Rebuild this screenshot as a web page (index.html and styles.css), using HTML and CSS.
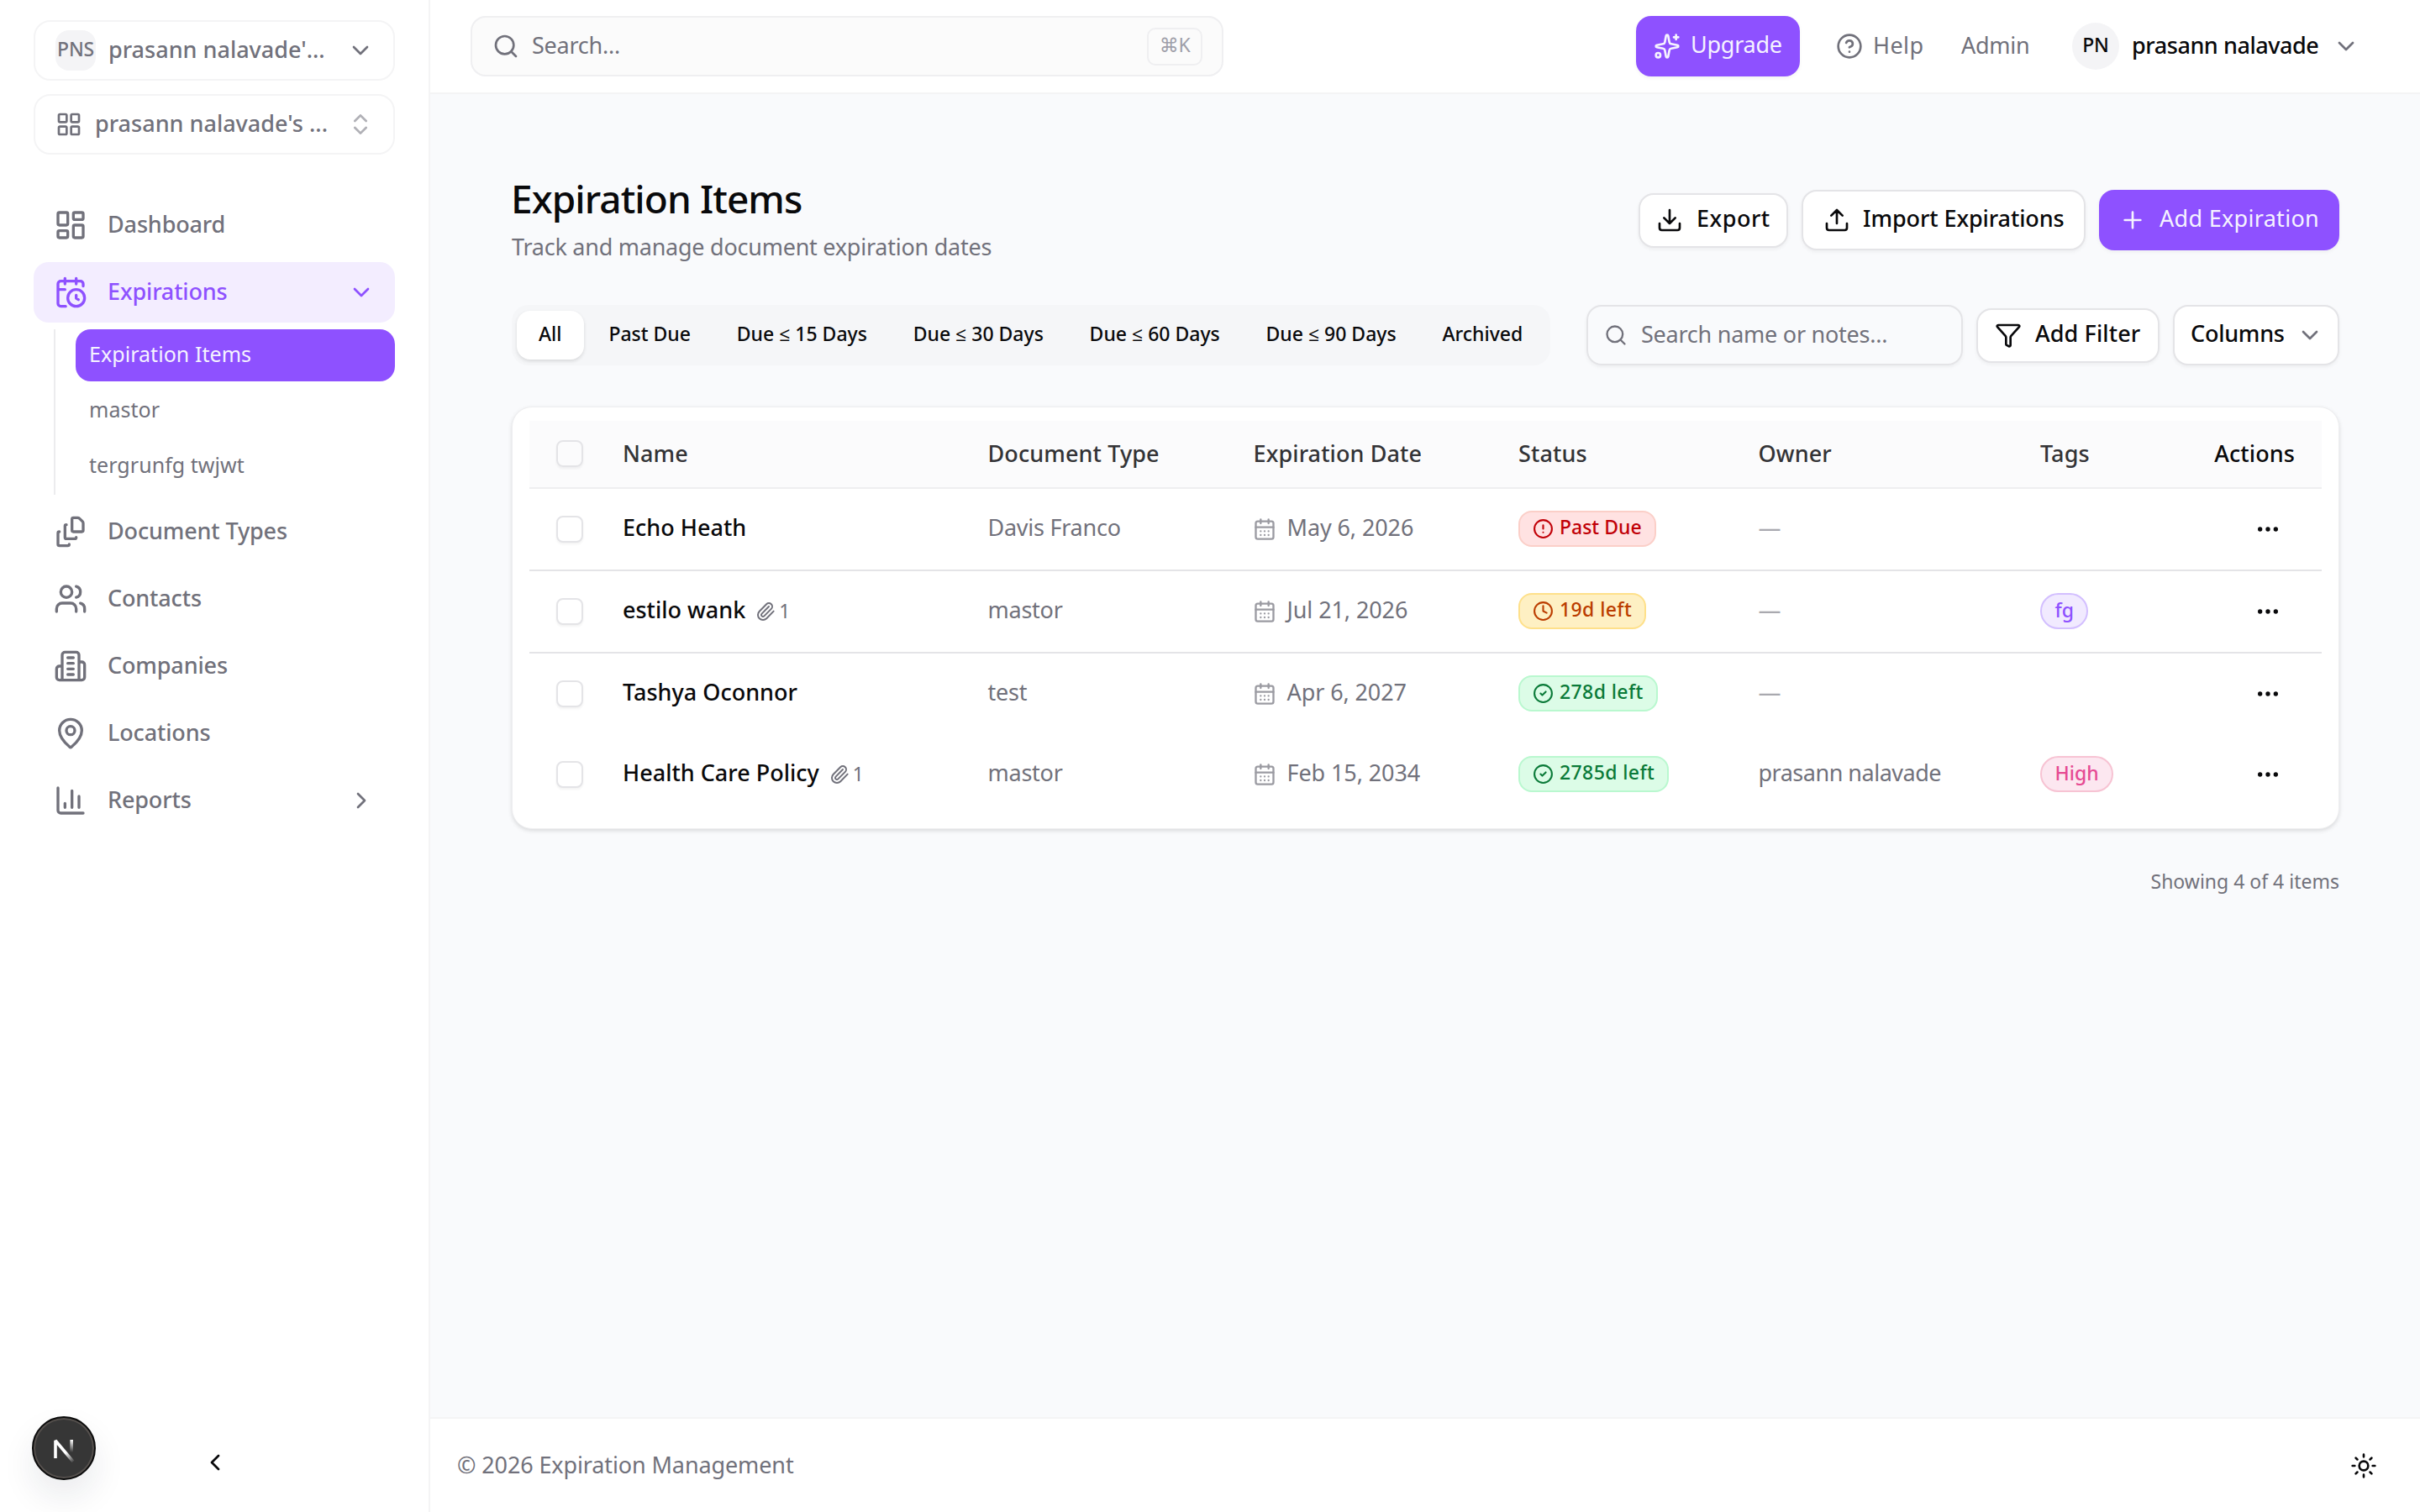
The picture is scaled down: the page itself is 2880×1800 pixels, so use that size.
FILE: index.html
```html
<!DOCTYPE html>
<html lang="en">
<head>
    <meta charset="UTF-8">
    <meta name="viewport" content="width=device-width, initial-scale=1.0">
    <title>Expiration Items</title>
    <link rel="stylesheet" href="styles.css">
</head>
<body>
    <svg class="sprite" width="0" height="0">
        <symbol id="chevron-down" viewBox="0 0 24 24"><path d="m6 9 6 6 6-6"/></symbol>
        <symbol id="chevron-right" viewBox="0 0 24 24"><path d="m9 18 6-6-6-6"/></symbol>
        <symbol id="chevron-left" viewBox="0 0 24 24"><path d="m15 18-6-6 6-6"/></symbol>
        <symbol id="chevrons" viewBox="0 0 24 24"><path d="m7 15 5 5 5-5M7 9l5-5 5 5"/></symbol>
        <symbol id="grid" viewBox="0 0 24 24"><rect x="3" y="3" width="7" height="7" rx="1"/><rect x="14" y="3" width="7" height="7" rx="1"/><rect x="14" y="14" width="7" height="7" rx="1"/><rect x="3" y="14" width="7" height="7" rx="1"/></symbol>
        <symbol id="dashboard" viewBox="0 0 24 24"><rect x="3" y="3" width="7" height="9" rx="1"/><rect x="14" y="3" width="7" height="5" rx="1"/><rect x="14" y="12" width="7" height="9" rx="1"/><rect x="3" y="16" width="7" height="5" rx="1"/></symbol>
        <symbol id="calendar-clock" viewBox="0 0 24 24"><path d="M16 14v2.2l1.6 1M16 2v4M21 7.5V6a2 2 0 0 0-2-2H5a2 2 0 0 0-2 2v14a2 2 0 0 0 2 2h3.5M3 10h5M8 2v4"/><circle cx="16" cy="16" r="6"/></symbol>
        <symbol id="file-stack" viewBox="0 0 24 24"><path d="M11 21a1 1 0 0 1-1 1H4a1 1 0 0 1-1-1v-8a1 1 0 0 1 1-1M16 16a1 1 0 0 1-1 1H9a1 1 0 0 1-1-1V8a1 1 0 0 1 1-1M21 6a2 2 0 0 0-.586-1.414l-2-2A2 2 0 0 0 17 2h-3a1 1 0 0 0-1 1v8a1 1 0 0 0 1 1h6a1 1 0 0 0 1-1z"/></symbol>
        <symbol id="users" viewBox="0 0 24 24"><path d="M16 21v-2a4 4 0 0 0-4-4H6a4 4 0 0 0-4 4v2M16 3.128a4 4 0 0 1 0 7.744M22 21v-2a4 4 0 0 0-3-3.87"/><circle cx="9" cy="7" r="4"/></symbol>
        <symbol id="building" viewBox="0 0 24 24"><path d="M6 22V4a2 2 0 0 1 2-2h8a2 2 0 0 1 2 2v18ZM6 12H4a2 2 0 0 0-2 2v6a2 2 0 0 0 2 2h2M18 9h2a2 2 0 0 1 2 2v9a2 2 0 0 1-2 2h-2M10 6h4M10 10h4M10 14h4M10 18h4"/></symbol>
        <symbol id="map-pin" viewBox="0 0 24 24"><path d="M20 10c0 4.993-5.539 10.193-7.399 11.799a1 1 0 0 1-1.202 0C9.539 20.193 4 14.993 4 10a8 8 0 0 1 16 0"/><circle cx="12" cy="10" r="3"/></symbol>
        <symbol id="chart" viewBox="0 0 24 24"><path d="M3 3v16a2 2 0 0 0 2 2h16M18 17V9M13 17V5M8 17v-3"/></symbol>
        <symbol id="search" viewBox="0 0 24 24"><circle cx="11" cy="11" r="8"/><path d="m21 21-4.3-4.3"/></symbol>
        <symbol id="sparkles" viewBox="0 0 24 24"><path d="M11.017 2.814a1 1 0 0 1 1.966 0l1.051 5.558a2 2 0 0 0 1.594 1.594l5.558 1.051a1 1 0 0 1 0 1.966l-5.558 1.051a2 2 0 0 0-1.594 1.594l-1.051 5.558a1 1 0 0 1-1.966 0l-1.051-5.558a2 2 0 0 0-1.594-1.594l-5.558-1.051a1 1 0 0 1 0-1.966l5.558-1.051a2 2 0 0 0 1.594-1.594zM20 2v4M22 4h-4"/><circle cx="4" cy="20" r="2"/></symbol>
        <symbol id="help" viewBox="0 0 24 24"><circle cx="12" cy="12" r="10"/><path d="M9.09 9a3 3 0 0 1 5.83 1c0 2-3 3-3 3M12 17h.01"/></symbol>
        <symbol id="download" viewBox="0 0 24 24"><path d="M21 15v4a2 2 0 0 1-2 2H5a2 2 0 0 1-2-2v-4M7 10l5 5 5-5M12 15V3"/></symbol>
        <symbol id="upload" viewBox="0 0 24 24"><path d="M21 15v4a2 2 0 0 1-2 2H5a2 2 0 0 1-2-2v-4M17 8l-5-5-5 5M12 3v12"/></symbol>
        <symbol id="plus" viewBox="0 0 24 24"><path d="M5 12h14M12 5v14"/></symbol>
        <symbol id="funnel" viewBox="0 0 24 24"><path d="M10 20a1 1 0 0 0 .553.895l2 1A1 1 0 0 0 14 21v-7a2 2 0 0 1 .517-1.341L21.74 4.67A1 1 0 0 0 21 3H3a1 1 0 0 0-.742 1.67l7.225 7.989A2 2 0 0 1 10 14z"/></symbol>
        <symbol id="paperclip" viewBox="0 0 24 24"><path d="m16 6-8.414 8.586a2 2 0 0 0 2.829 2.829l8.414-8.586a4 4 0 1 0-5.657-5.657l-8.379 8.551a6 6 0 1 0 8.485 8.485l8.379-8.551"/></symbol>
        <symbol id="calendar" viewBox="0 0 24 24"><path d="M8 2v4M16 2v4M3 10h18M8 14h.01M12 14h.01M16 14h.01M8 18h.01M12 18h.01M16 18h.01"/><rect x="3" y="4" width="18" height="18" rx="2"/></symbol>
        <symbol id="alert" viewBox="0 0 24 24"><circle cx="12" cy="12" r="10"/><path d="M12 8v4M12 16h.01"/></symbol>
        <symbol id="clock" viewBox="0 0 24 24"><circle cx="12" cy="12" r="10"/><path d="M12 6v6l4 2"/></symbol>
        <symbol id="check" viewBox="0 0 24 24"><circle cx="12" cy="12" r="10"/><path d="m9 12 2 2 4-4"/></symbol>
        <symbol id="dots" viewBox="0 0 24 24"><circle cx="12" cy="12" r="1"/><circle cx="19" cy="12" r="1"/><circle cx="5" cy="12" r="1"/></symbol>
        <symbol id="sun" viewBox="0 0 24 24"><circle cx="12" cy="12" r="4"/><path d="M12 2v2M12 20v2M4.93 4.93l1.41 1.41M17.66 17.66l1.41 1.41M2 12h2M20 12h2M6.34 17.66l-1.41 1.41M19.07 4.93l-1.41 1.41"/></symbol>
    </svg>

    <div class="app">
        <aside class="sidebar">
            <div class="switcher">
                <span class="org-badge">PNS</span>
                <span class="label">prasann nalavade'...</span>
                <svg class="icon"><use href="#chevron-down"/></svg>
            </div>
            <div class="switcher workspace">
                <svg class="icon"><use href="#grid"/></svg>
                <span class="label">prasann nalavade's ...</span>
                <svg class="icon faded"><use href="#chevrons"/></svg>
            </div>

            <nav class="nav">
                <a class="nav-item"><svg class="icon lg"><use href="#dashboard"/></svg><span>Dashboard</span></a>
                <a class="nav-item open"><svg class="icon lg"><use href="#calendar-clock"/></svg><span>Expirations</span><svg class="icon end"><use href="#chevron-down"/></svg></a>
                <div class="subnav">
                    <a class="active"><span>Expiration Items</span></a>
                    <a><span>mastor</span></a>
                    <a><span>tergrunfg twjwt</span></a>
                </div>
                <a class="nav-item"><svg class="icon lg"><use href="#file-stack"/></svg><span>Document Types</span></a>
                <a class="nav-item"><svg class="icon lg"><use href="#users"/></svg><span>Contacts</span></a>
                <a class="nav-item"><svg class="icon lg"><use href="#building"/></svg><span>Companies</span></a>
                <a class="nav-item"><svg class="icon lg"><use href="#map-pin"/></svg><span>Locations</span></a>
                <a class="nav-item"><svg class="icon lg"><use href="#chart"/></svg><span>Reports</span><svg class="icon end"><use href="#chevron-right"/></svg></a>
            </nav>

            <div class="collapse"><svg class="icon"><use href="#chevron-left"/></svg></div>
        </aside>

        <div class="content">
            <header class="topbar">
                <div class="global-search">
                    <svg class="icon"><use href="#search"/></svg>
                    <span class="label">Search...</span>
                    <kbd><span>⌘K</span></kbd>
                </div>
                <div class="account">
                    <button class="btn primary upgrade"><svg class="icon"><use href="#sparkles"/></svg><span>Upgrade</span></button>
                    <a class="help"><svg class="icon"><use href="#help"/></svg><span>Help</span></a>
                    <a class="admin"><span>Admin</span></a>
                    <div class="avatar"><span>PN</span></div>
                    <div class="user"><span>prasann nalavade</span><svg class="icon"><use href="#chevron-down"/></svg></div>
                </div>
            </header>

            <main class="main">
                <div class="page-head">
                    <div class="titles">
                        <h1>Expiration Items</h1>
                        <p>Track and manage document expiration dates</p>
                    </div>
                    <div class="actions">
                        <button class="btn small export"><svg class="icon"><use href="#download"/></svg><span>Export</span></button>
                        <button class="btn import"><svg class="icon"><use href="#upload"/></svg><span>Import Expirations</span></button>
                        <button class="btn primary add"><svg class="icon"><use href="#plus"/></svg><span>Add Expiration</span></button>
                    </div>
                </div>

                <div class="toolbar">
                    <div class="tabs">
                        <span class="tab active"><span>All</span></span>
                        <span class="tab"><span>Past Due</span></span>
                        <span class="tab"><span>Due ≤ 15 Days</span></span>
                        <span class="tab"><span>Due ≤ 30 Days</span></span>
                        <span class="tab"><span>Due ≤ 60 Days</span></span>
                        <span class="tab"><span>Due ≤ 90 Days</span></span>
                        <span class="tab"><span>Archived</span></span>
                    </div>
                    <div class="filters">
                        <div class="item-search"><svg class="icon"><use href="#search"/></svg><span>Search name or notes...</span></div>
                        <button class="btn small filter"><svg class="icon"><use href="#funnel"/></svg><span>Add Filter</span></button>
                        <button class="btn columns"><span>Columns</span><svg class="icon"><use href="#chevron-down"/></svg></button>
                    </div>
                </div>

                <div class="card">
                    <div class="row head">
                        <div><i class="checkbox"></i></div>
                        <div><span>Name</span></div>
                        <div><span>Document Type</span></div>
                        <div><span>Expiration Date</span></div>
                        <div><span>Status</span></div>
                        <div><span>Owner</span></div>
                        <div><span>Tags</span></div>
                        <div class="right"><span>Actions</span></div>
                    </div>
                    <div class="row lined">
                        <div><i class="checkbox"></i></div>
                        <div class="name"><span>Echo Heath</span></div>
                        <div><span>Davis Franco</span></div>
                        <div class="date"><svg class="icon"><use href="#calendar"/></svg><span>May 6, 2026</span></div>
                        <div><span class="badge red"><svg class="icon"><use href="#alert"/></svg><span>Past Due</span></span></div>
                        <div class="none"><span>—</span></div>
                        <div></div>
                        <div class="right more"><svg class="icon"><use href="#dots"/></svg></div>
                    </div>
                    <div class="row lined">
                        <div><i class="checkbox"></i></div>
                        <div class="name"><span>estilo wank</span><svg class="icon"><use href="#paperclip"/></svg><small>1</small></div>
                        <div><span>mastor</span></div>
                        <div class="date"><svg class="icon"><use href="#calendar"/></svg><span>Jul 21, 2026</span></div>
                        <div><span class="badge amber"><svg class="icon"><use href="#clock"/></svg><span>19d left</span></span></div>
                        <div class="none"><span>—</span></div>
                        <div><span class="tag purple"><span>fg</span></span></div>
                        <div class="right more"><svg class="icon"><use href="#dots"/></svg></div>
                    </div>
                    <div class="row">
                        <div><i class="checkbox"></i></div>
                        <div class="name"><span>Tashya Oconnor</span></div>
                        <div><span>test</span></div>
                        <div class="date"><svg class="icon"><use href="#calendar"/></svg><span>Apr 6, 2027</span></div>
                        <div><span class="badge green"><svg class="icon"><use href="#check"/></svg><span>278d left</span></span></div>
                        <div class="none"><span>—</span></div>
                        <div></div>
                        <div class="right more"><svg class="icon"><use href="#dots"/></svg></div>
                    </div>
                    <div class="row">
                        <div><i class="checkbox"></i></div>
                        <div class="name"><span>Health Care Policy</span><svg class="icon"><use href="#paperclip"/></svg><small>1</small></div>
                        <div><span>mastor</span></div>
                        <div class="date"><svg class="icon"><use href="#calendar"/></svg><span>Feb 15, 2034</span></div>
                        <div><span class="badge green"><svg class="icon"><use href="#check"/></svg><span>2785d left</span></span></div>
                        <div class="owner"><span>prasann nalavade</span></div>
                        <div><span class="tag pink"><span>High</span></span></div>
                        <div class="right more"><svg class="icon"><use href="#dots"/></svg></div>
                    </div>
                </div>

                <p class="count">Showing 4 of 4 items</p>
            </main>

            <footer class="footer">
                <span>© 2026 Expiration Management</span>
                <svg class="icon"><use href="#sun"/></svg>
            </footer>
        </div>
    </div>

    <div class="dev-badge">
        <svg width="76" height="76" viewBox="0 0 76 76" fill="none" stroke-width="3.6">
            <defs>
                <linearGradient id="fade-a" gradientUnits="userSpaceOnUse" x1="41" y1="43" x2="50" y2="55"><stop stop-color="#fff"/><stop offset="1" stop-color="#fff" stop-opacity="0"/></linearGradient>
                <linearGradient id="fade-b" gradientUnits="userSpaceOnUse" x1="47" y1="28" x2="47" y2="43"><stop stop-color="#fff"/><stop offset="1" stop-color="#fff" stop-opacity="0"/></linearGradient>
            </defs>
            <path d="M28 50V29L49 54" stroke="url(#fade-a)" stroke-linejoin="bevel"/>
            <path d="M47.2 28v16" stroke="url(#fade-b)"/>
        </svg>
    </div>
</body>
</html>
```
FILE: styles.css
```css
:root {
    --primary: #8e51ff;
    --text: #09090b;
    --muted: #71717b;
    --border: #e4e4e7;
    --soft-border: #f4f4f5;
    --page: #f9fafc;
}
* {
    box-sizing: border-box;
}
html, body {
    margin: 0;
    height: 100%;
    overflow: hidden;
}
body {
    font-family: "Noto Sans", "Open Sans", sans-serif;
    font-size: 27px;
    line-height: 40px;
    letter-spacing: -0.25px;
    color: var(--text);
    background: #fff;
    white-space: nowrap;
}
button {
    font: inherit;
    letter-spacing: inherit;
    color: inherit;
}
h1, p {
    margin: 0;
}
.sprite {
    display: none;
}
.icon {
    width: 32px;
    height: 32px;
    flex: none;
    fill: none;
    stroke: currentColor;
    stroke-width: 2;
    stroke-linecap: round;
    stroke-linejoin: round;
}
.icon.lg {
    width: 40px;
    height: 40px;
}
.app {
    display: flex;
    height: 100%;
}

/* sidebar */
.sidebar {
    width: 512px;
    flex: none;
    display: flex;
    flex-direction: column;
    padding: 24px 40px 43px;
    border-right: 2px solid var(--soft-border);
    color: var(--muted);
    font-weight: 500;
}
.switcher {
    display: flex;
    align-items: center;
    width: 430px;
    height: 72px;
    padding: 0 23px 0 24px;
    border: 2px solid var(--soft-border);
    border-radius: 20px;
}
.switcher .label {
    flex: 1;
    padding-bottom: 3px;
    letter-spacing: 0;
}
.switcher.workspace {
    margin-top: 16px;
    padding-left: 24px;
}
.workspace .label {
    margin-left: 15px;
    padding-bottom: 2px;
}
.org-badge {
    width: 48px;
    height: 48px;
    margin-right: 15px;
    padding-bottom: 4px;
    border-radius: 16px;
    background: #f4f4f6;
    font-size: 23px;
    line-height: 44px;
    text-align: center;
}
.faded {
    opacity: 0.55;
}
.nav {
    display: flex;
    flex-direction: column;
    gap: 8px;
    width: 430px;
    margin-top: 48px;
}
.nav-item {
    display: flex;
    align-items: center;
    gap: 24px;
    height: 72px;
    padding: 0 24px;
    border-radius: 18px;
    letter-spacing: -0.15px;
}
.nav-item span {
    padding-bottom: 3px;
}
.nav-item .end {
    margin-left: auto;
}
.nav-item.open {
    background: #f3edff;
    color: var(--primary);
}
.subnav {
    display: flex;
    flex-direction: column;
    gap: 4px;
    height: 197px;
    margin-left: 24px;
    padding-left: 24px;
    border-left: 2px solid #ececee;
    font-size: 25px;
    font-weight: 400;
    letter-spacing: 0.05px;
}
.subnav a {
    display: flex;
    align-items: center;
    height: 62.4px;
    padding: 0 16px 5px;
    border-radius: 18px;
}
.subnav .active {
    background: var(--primary);
    color: #f5f3ff;
}
.collapse {
    display: flex;
    justify-content: center;
    margin-top: auto;
    padding-left: 2px;
    color: var(--text);
}

/* top bar */
.content {
    flex: 1;
    display: flex;
    flex-direction: column;
    background: var(--page);
}
.topbar {
    display: flex;
    align-items: center;
    justify-content: space-between;
    height: 112px;
    padding: 0 72px 0 48px;
    border-bottom: 2px solid var(--soft-border);
    background: #fff;
    color: var(--muted);
}
.global-search {
    display: flex;
    align-items: center;
    width: 896px;
    height: 72px;
    padding: 0 23px 0 24px;
    border: 2px solid #efeff1;
    border-radius: 18px;
    background: #fbfbfb;
}
.global-search .label {
    flex: 1;
    margin-left: 15px;
    padding-bottom: 2px;
}
kbd {
    width: 66px;
    height: 45px;
    border: 2px solid #efeff1;
    border-radius: 10px;
    font: 23px/37px "Noto Sans", "DejaVu Sans", sans-serif;
    text-align: center;
    color: #9f9fa9;
}
.account {
    display: flex;
    align-items: center;
}
.account span {
    padding-bottom: 2px;
}
.btn {
    display: flex;
    align-items: center;
    height: 72px;
    padding: 0 0 0 24px;
    border: 2px solid var(--border);
    border-radius: 18px;
    background: #fff;
    box-shadow: 0 2px 4px rgba(0, 0, 0, 0.05);
    font-weight: 500;
}
.btn.small {
    height: 65px;
}
.btn span {
    padding-bottom: 4px;
}
.btn.primary {
    border: 0;
    background: var(--primary);
    color: #f5f3ff;
    font-weight: 400;
}
.upgrade {
    width: 195px;
    padding-left: 21px;
    gap: 12px;
}
.help {
    display: flex;
    align-items: center;
    gap: 12px;
    width: 149px;
    margin-left: 43px;
    letter-spacing: 0.4px;
}
.admin {
    display: flex;
    width: 132px;
}
.avatar {
    width: 56px;
    height: 56px;
    border-radius: 50%;
    background: #f4f4f6;
    color: var(--text);
    font-size: 23px;
    font-weight: 500;
    line-height: 52px;
    text-align: center;
}
.user {
    display: flex;
    align-items: center;
    justify-content: space-between;
    width: 271px;
    margin-left: 15px;
}
.user span {
    color: var(--text);
    font-weight: 500;
    letter-spacing: -0.45px;
}

/* page */
.main {
    flex: 1;
    padding: 95px 96px 0 97px;
}
.page-head {
    display: flex;
    justify-content: space-between;
    height: 110px;
}
h1 {
    margin-left: -1px;
    font-size: 46px;
    font-weight: 500;
    line-height: 58px;
    letter-spacing: -0.95px;
}
.titles p {
    margin-top: 9px;
    color: var(--muted);
}
.actions, .filters {
    display: flex;
    align-items: center;
    gap: 16px;
}
.export {
    width: 178px;
    padding-left: 19px;
    gap: 16px;
    letter-spacing: 0.5px;
}
.import {
    width: 338px;
    gap: 15px;
    letter-spacing: -0.1px;
}
.add {
    width: 286px;
    gap: 16px;
    letter-spacing: 0.3px;
}
.toolbar {
    display: flex;
    justify-content: space-between;
    margin-top: 46px;
}
.tabs {
    display: flex;
    align-items: center;
    gap: 4px;
    height: 72px;
    width: 1236px;
    padding: 0 6px;
    border-radius: 20px;
    background: #f5f6f8;
    font-size: 23px;
    font-weight: 500;
    letter-spacing: 0;
}
.tab {
    display: flex;
    align-items: center;
    height: 58px;
    padding: 0 25.4px 4px 25.4px;
    border-radius: 16px;
}
.tab.active {
    padding-left: 26px;
    padding-right: 26.5px;
    background: #fff;
    box-shadow: 0 2px 4px rgba(0, 0, 0, 0.12);
}
.item-search {
    display: flex;
    align-items: center;
    gap: 16px;
    width: 448px;
    height: 72px;
    padding-left: 19px;
    border: 2px solid var(--border);
    border-radius: 18px;
    box-shadow: 0 2px 4px rgba(0, 0, 0, 0.05);
    color: var(--muted);
}
.item-search .icon {
    width: 28px;
    height: 28px;
}
.item-search span {
    padding-bottom: 2px;
}
.filter {
    width: 218px;
    padding-left: 20px;
    gap: 16px;
    letter-spacing: 0.1px;
}
.columns {
    width: 198px;
    padding-left: 19px;
    gap: 14px;
}
.columns .icon {
    color: var(--muted);
}

/* table */
.card {
    margin-top: 49px;
    padding: 16px 20px 16px;
    border: 1px solid #eeeef0;
    border-radius: 24px;
    background: #fff;
    box-shadow: 0 2px 5px rgba(0, 0, 0, 0.13);
}
.row {
    display: grid;
    grid-template-columns: 79px 434.5px 316px 315.5px 285.5px 335.5px 206px 1fr;
    align-items: center;
    height: 96px;
    color: var(--muted);
}
.row > div {
    display: flex;
    align-items: center;
    padding-left: 32px;
}
.row > div > span {
    padding-bottom: 4px;
}
.row.lined {
    height: 98px;
    border-bottom: 2px solid var(--border);
}
.row.head {
    height: 81px;
    border-bottom: 2px solid #eeeef0;
    background: #fbfbfc;
    color: #333336;
    font-weight: 500;
    letter-spacing: 0.1px;
}
.row.head > div > span {
    padding-bottom: 2px;
}
.row > .right {
    justify-content: flex-end;
    padding: 0 32px 0 0;
    color: var(--text);
}
.row > .more {
    padding-right: 48px;
}
.checkbox {
    width: 32px;
    height: 32px;
    flex: none;
    margin-bottom: 1px;
    border: 2px solid var(--border);
    border-radius: 8px;
    background: #fff;
    box-shadow: 0 2px 3px rgba(0, 0, 0, 0.05);
}
.head .checkbox {
    background: transparent;
}
.name span {
    color: var(--text);
    font-weight: 500;
    letter-spacing: 0;
}
.name .icon {
    width: 24px;
    height: 24px;
    margin-left: 12px;
}
.name small {
    margin-left: 4px;
    padding-bottom: 3px;
    font-size: 23px;
}
.date {
    letter-spacing: -0.1px;
}
.date .icon {
    width: 28px;
    height: 28px;
    margin: 0 13px 0 -1px;
    opacity: 0.7;
}
.none {
    opacity: 0.6;
}
.owner {
    letter-spacing: -0.5px;
}
.row .badge {
    display: flex;
    align-items: center;
    gap: 7px;
    height: 43px;
    margin-bottom: 1px;
    padding: 0 15px;
    border: 2px solid;
    border-radius: 16px;
    font-size: 23px;
    font-weight: 500;
    letter-spacing: 0.4px;
}
.badge .icon {
    width: 25px;
    height: 25px;
}
.badge span {
    padding-bottom: 5px;
}
.row .badge.red {
    border-color: #fbcfc8;
    background: #ffe2e2;
    color: #c10007;
    letter-spacing: 0;
}
.row .badge.amber {
    border-color: #fee08a;
    background: #fef0c3;
    color: #bb3d00;
}
.row .badge.green {
    border-color: #b9f8cf;
    background: #dcfce7;
    color: #0a7a38;
}
.row .tag {
    display: flex;
    align-items: center;
    height: 43px;
    margin-bottom: 1px;
    padding: 0 15.5px 3px;
    border: 2px solid;
    border-radius: 22px;
    font-size: 23px;
    font-weight: 500;
    letter-spacing: 0;
}
.row .tag.purple {
    border-color: #d3bfff;
    background: #f1eaff;
    color: var(--primary);
}
.row .tag.pink {
    border-color: #f7c3d3;
    background: #fce7f0;
    color: #e64a93;
}
.count {
    margin-top: 45px;
    font-size: 23px;
    line-height: 34px;
    letter-spacing: 0;
    text-align: right;
    color: var(--muted);
}
.footer {
    display: flex;
    align-items: center;
    justify-content: space-between;
    height: 113px;
    padding: 0 51px 0 32px;
    border-top: 2px solid var(--soft-border);
    background: #fff;
    color: var(--muted);
    letter-spacing: -0.12px;
}
.footer span {
    padding-bottom: 2px;
}
.footer .icon {
    color: var(--text);
}

/* floating dev tools button */
.dev-badge {
    position: absolute;
    left: 38px;
    top: 1686px;
    width: 76px;
    height: 76px;
    border-radius: 50%;
    background: #363636;
    border: 2px solid #0c0c0c;
    box-shadow: inset 0 0 0 2px #55504d, 0 20px 40px rgba(20, 30, 50, 0.09);
}
.dev-badge svg {
    display: block;
    margin: -2px;
}
```
